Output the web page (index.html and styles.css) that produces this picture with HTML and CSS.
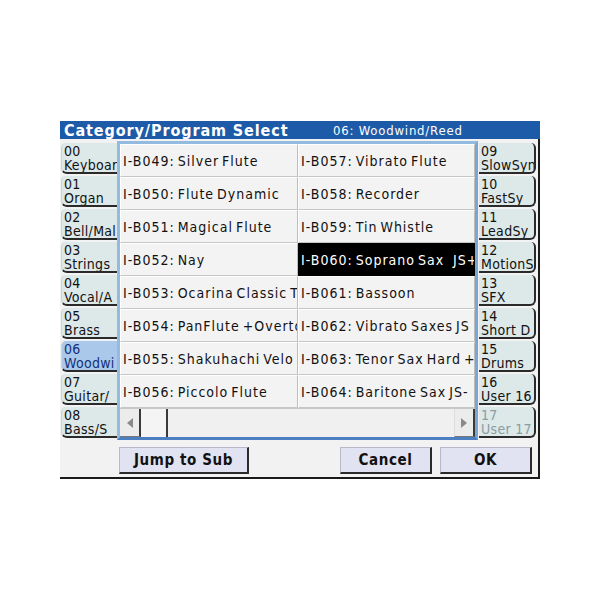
FILE: index.html
```html
<!DOCTYPE html>
<html>
<head>
<meta charset="utf-8">
<link rel="stylesheet" href="styles.css">
</head>
<body>
<div class="screen">
  <div class="titlebar">
    <span class="title">Category/Program Select</span>
    <span class="subtitle">06: Woodwind/Reed</span>
  </div>
  <div class="frame">
    <div class="main">
      <div class="tabs left">
        <div class="tab"><span>00</span><span>Keyboar</span></div>
        <div class="tab"><span>01</span><span>Organ</span></div>
        <div class="tab"><span>02</span><span>Bell/Mal</span></div>
        <div class="tab"><span>03</span><span>Strings</span></div>
        <div class="tab"><span>04</span><span>Vocal/A</span></div>
        <div class="tab"><span>05</span><span>Brass</span></div>
        <div class="tab active"><span>06</span><span>Woodwi</span></div>
        <div class="tab"><span>07</span><span>Guitar/</span></div>
        <div class="tab"><span>08</span><span>Bass/S</span></div>
      </div>
      <div class="panel">
        <div class="grid">
          <div class="cell">I-B049: Silver Flute</div>
          <div class="cell">I-B057: Vibrato Flute</div>
          <div class="cell">I-B050: Flute Dynamic</div>
          <div class="cell">I-B058: Recorder</div>
          <div class="cell">I-B051: Magical Flute</div>
          <div class="cell">I-B059: Tin Whistle</div>
          <div class="cell">I-B052: Nay</div>
          <div class="cell selected">I-B060: Soprano Sax&nbsp;&nbsp; JS+</div>
          <div class="cell">I-B053: Ocarina Classic Trem</div>
          <div class="cell">I-B061: Bassoon</div>
          <div class="cell">I-B054: PanFlute +Overtone</div>
          <div class="cell">I-B062: Vibrato Saxes JS</div>
          <div class="cell">I-B055: Shakuhachi Velo X</div>
          <div class="cell">I-B063: Tenor Sax Hard +</div>
          <div class="cell">I-B056: Piccolo Flute</div>
          <div class="cell">I-B064: Baritone Sax JS-</div>
        </div>
        <div class="scrollbar">
          <div class="sbtn"><span class="arrow-left"></span></div>
          <div class="thumb"></div>
          <div class="track"></div>
          <div class="sbtn"><span class="arrow-right"></span></div>
        </div>
      </div>
      <div class="tabs right">
        <div class="tab"><span>09</span><span>SlowSyn</span></div>
        <div class="tab"><span>10</span><span>FastSy</span></div>
        <div class="tab"><span>11</span><span>LeadSy</span></div>
        <div class="tab"><span>12</span><span>MotionS</span></div>
        <div class="tab"><span>13</span><span>SFX</span></div>
        <div class="tab"><span>14</span><span>Short D</span></div>
        <div class="tab"><span>15</span><span>Drums</span></div>
        <div class="tab"><span>16</span><span>User 16</span></div>
        <div class="tab disabled"><span>17</span><span>User 17</span></div>
      </div>
    </div>
    <div class="footer">
      <div class="btn jump">Jump to Sub</div>
      <div class="spacer"></div>
      <div class="btn cancel">Cancel</div>
      <div class="btn ok">OK</div>
    </div>
  </div>
</div>
</body>
</html>
```
FILE: styles.css
```css
html, body {
  margin: 0;
  padding: 0;
  background: #ffffff;
}
body {
  font-family: "DejaVu Sans Condensed", "DejaVu Sans", sans-serif;
}
.screen {
  margin: 121px 0 0 60px;
  width: 480px;
  height: 358px;
  background: #f2f2f2;
  display: flex;
  flex-direction: column;
}
.titlebar {
  height: 18px;
  background: #1d5aa7;
  color: #ffffff;
  display: flex;
  align-items: center;
  flex: none;
}
.title {
  font-weight: bold;
  font-size: 16px;
  margin-left: 4px;
  width: 269px;
  letter-spacing: 0.9px;
  white-space: nowrap;
}
.subtitle {
  font-size: 13px;
  letter-spacing: 0.8px;
  white-space: nowrap;
}
.frame {
  flex: 1;
  display: flex;
  flex-direction: column;
  border-right: 2px solid #1a1a1a;
  border-bottom: 2px solid #1a1a1a;
}
.main {
  display: flex;
  height: 301px;
  flex: none;
}
.tabs {
  display: flex;
  flex-direction: column;
  padding-top: 4px;
}
.tabs.left {
  width: 56px;
  padding-left: 1px;
}
.tabs.right {
  width: 57px;
  padding-left: 1px;
}
.tab {
  height: 31px;
  margin-bottom: 2px;
  background: #dde8e8;
  display: flex;
  flex-direction: column;
  justify-content: center;
  font-size: 14px;
  line-height: 14px;
  letter-spacing: 0.3px;
  color: #111111;
  padding-left: 2px;
  overflow: hidden;
  white-space: nowrap;
  box-sizing: border-box;
}
.tabs.left .tab {
  border-top-left-radius: 5px;
  border-bottom-left-radius: 6px;
  border-bottom: 2px solid #2a2a2a;
  border-left: 1px solid #c9d4d4;
}
.tabs.right .tab {
  border-top-right-radius: 5px;
  border-bottom-right-radius: 6px;
  border-bottom: 2px solid #2a2a2a;
  border-right: 2px solid #2a2a2a;
}
.tab.active {
  background: #a9c8ea;
  color: #12307a;
}
.tab.disabled {
  color: #8a9ca4;
  border-bottom-color: #6a6a6a;
  border-right-color: #6a6a6a;
}
.panel {
  width: 361px;
  margin-top: 2px;
  height: 299px;
  box-sizing: border-box;
  border: 3px solid #93badf;
  border-bottom-color: #4b7fc2;
  border-right-color: #7aa6d6;
  background: #dcdcdc;
  display: flex;
  flex-direction: column;
}
.grid {
  display: grid;
  grid-template-columns: 178px 177px;
  grid-template-rows: repeat(8, 33px);
  height: 264px;
  background: #c4c4c4;
}
.cell {
  background: #f3f3f3;
  border-right: 1px solid #bdbdbd;
  border-bottom: 1px solid #c6c6c6;
  border-top: 1px solid #ffffff;
  border-left: 1px solid #ffffff;
  box-sizing: border-box;
  font-size: 14px;
  letter-spacing: 1px;
  word-spacing: -2px;
  color: #111111;
  display: flex;
  align-items: center;
  padding-left: 2px;
  white-space: nowrap;
  overflow: hidden;
}
.cell.selected {
  background: #000000;
  color: #ffffff;
  border-color: #000000;
}
.scrollbar {
  height: 29px;
  display: flex;
  background: #f0f0f0;
  border-top: 1px solid #c8c8c8;
  box-sizing: border-box;
}
.sbtn {
  width: 21px;
  background: #ececec;
  border-right: 2px solid #3a3a3a;
  border-bottom: 1px solid #777;
  box-sizing: border-box;
  display: flex;
  align-items: center;
  justify-content: center;
}
.sbtn:last-child {
  border-left: 1px solid #dddddd;
}
.thumb {
  width: 27px;
  background: #f4f4f4;
  border-right: 2px solid #3a3a3a;
  box-sizing: border-box;
}
.track {
  flex: 1;
}
.arrow-left {
  width: 0;
  height: 0;
  border-top: 5px solid transparent;
  border-bottom: 5px solid transparent;
  border-right: 6px solid #8a8a8a;
}
.arrow-right {
  width: 0;
  height: 0;
  border-top: 5px solid transparent;
  border-bottom: 5px solid transparent;
  border-left: 6px solid #8a8a8a;
}
.footer {
  flex: 1;
  display: flex;
  align-items: flex-start;
  padding-top: 7px;
  padding-left: 59px;
}
.btn {
  height: 27px;
  box-sizing: border-box;
  background: #e1e2f2;
  border-top: 1px solid #b8b8c8;
  border-left: 1px solid #b8b8c8;
  border-right: 2px solid #2a2a2a;
  border-bottom: 2px solid #2a2a2a;
  font-weight: bold;
  font-size: 15px;
  color: #111111;
  display: flex;
  align-items: center;
  justify-content: center;
  letter-spacing: 0.6px;
}
.btn.jump {
  width: 130px;
}
.spacer {
  width: 91px;
}
.btn.cancel {
  width: 92px;
}
.btn.ok {
  width: 92px;
  margin-left: 8px;
}
```
